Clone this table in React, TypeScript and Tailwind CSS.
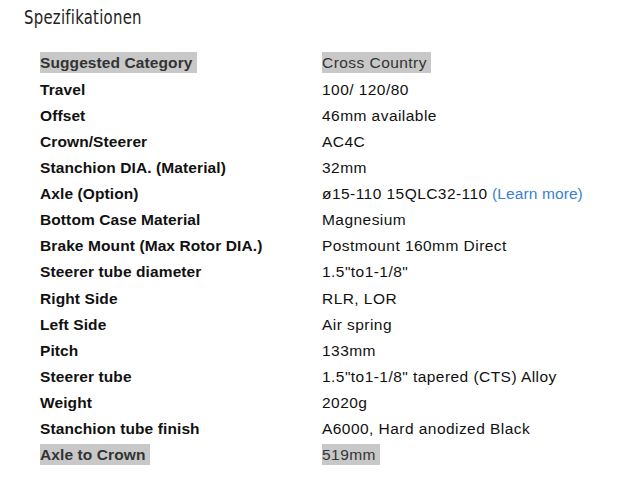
const specs: { label: string; value: string; link?: string; highlight?: boolean }[] = [
  { label: "Suggested Category", value: "Cross Country", highlight: true },
  { label: "Travel", value: "100/ 120/80" },
  { label: "Offset", value: "46mm available" },
  { label: "Crown/Steerer", value: "AC4C" },
  { label: "Stanchion DIA. (Material)", value: "32mm" },
  { label: "Axle (Option)", value: "ø15-110 15QLC32-110", link: "(Learn more)" },
  { label: "Bottom Case Material", value: "Magnesium" },
  { label: "Brake Mount (Max Rotor DIA.)", value: "Postmount 160mm Direct" },
  { label: "Steerer tube diameter", value: '1.5"to1-1/8"' },
  { label: "Right Side", value: "RLR, LOR" },
  { label: "Left Side", value: "Air spring" },
  { label: "Pitch", value: "133mm" },
  { label: "Steerer tube", value: '1.5"to1-1/8" tapered (CTS) Alloy' },
  { label: "Weight", value: "2020g" },
  { label: "Stanchion tube finish", value: "A6000, Hard anodized Black" },
  { label: "Axle to Crown", value: "519mm", highlight: true },
];

export default function App() {
  return (
    <div className="w-[618px] h-[482px] bg-white overflow-hidden pl-6 pt-[5px]" style={{ fontFamily: '"Liberation Sans", Arial, sans-serif' }}>
      <h2
        className="inline-block origin-left scale-x-[0.87] text-[19px] leading-[24px] text-[#222] tracking-[0.3px]"
        style={{ fontFamily: '"Liberation Sans Narrow", "DejaVu Sans Condensed", sans-serif' }}
      >
        Spezifikationen
      </h2>
      <div className="mt-[19px] ml-4 flex flex-col">
        {specs.map((s) => (
          <div key={s.label} className="flex h-[26.13px] items-center text-[15.5px]">
            <div className="w-[282px] font-bold text-[#111] tracking-[0.1px]">
              <span className={s.highlight ? "inline-block h-[21px] leading-[21px] pr-1 bg-[#c8c8c8] text-[#333]" : ""}>
                {s.label}
              </span>
            </div>
            <div className="text-[#111] tracking-[0.45px]">
              <span className={s.highlight ? "inline-block h-[21px] leading-[21px] pr-1 bg-[#c8c8c8] text-[#333]" : ""}>
                {s.value}
              </span>
              {s.link && <span className="text-[#3b7fd0] tracking-[0.1px]"> {s.link}</span>}
            </div>
          </div>
        ))}
      </div>
    </div>
  );
}
